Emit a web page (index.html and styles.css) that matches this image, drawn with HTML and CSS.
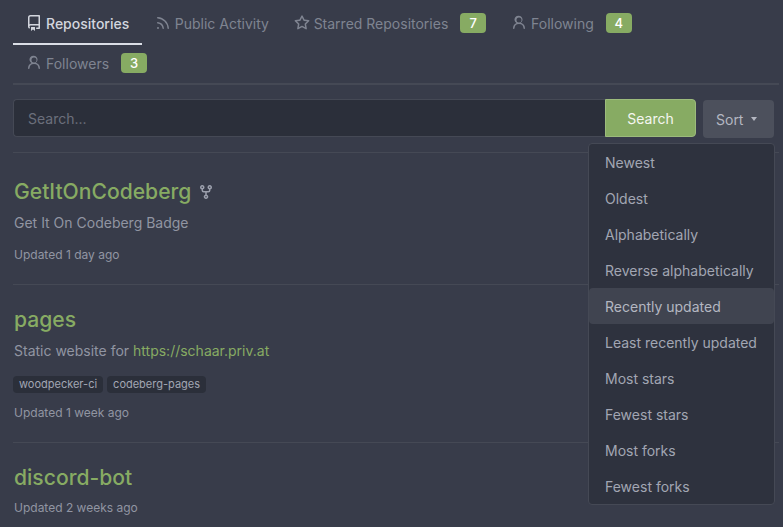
FILE: index.html
```html
<!DOCTYPE html>
<html>
<head>
<meta name="viewport" content="width=device-width, initial-scale=1">
<title>Repositories</title>
<link rel="stylesheet" href="styles.css">
</head>
<body>

<svg class="defs" width="0" height="0">
  <symbol id="i-repo" viewBox="0 0 16 16"><path d="M2 2.5A2.5 2.5 0 0 1 4.5 0h8.75a.75.75 0 0 1 .75.75v12.5a.75.75 0 0 1-.75.75h-2.5a.75.75 0 0 1 0-1.5h1.75v-2h-8a1 1 0 0 0-.714 1.7.75.75 0 1 1-1.072 1.05A2.495 2.495 0 0 1 2 11.5Zm10.5-1h-8a1 1 0 0 0-1 1v6.708A2.486 2.486 0 0 1 4.5 9h8ZM5 12.25a.25.25 0 0 1 .25-.25h3.5a.25.25 0 0 1 .25.25v3.25a.25.25 0 0 1-.4.2l-1.45-1.087a.249.249 0 0 0-.3 0L5.4 15.7a.25.25 0 0 1-.4-.2Z"/></symbol>
  <symbol id="i-rss" viewBox="0 0 16 16"><path d="M2.002 2.725a.75.75 0 0 1 .797-.699C8.79 2.42 13.58 7.21 13.974 13.201a.75.75 0 0 1-1.497.098 10.502 10.502 0 0 0-9.776-9.776.747.747 0 0 1-.7-.798ZM2.84 7.05h-.002a7.002 7.002 0 0 1 6.113 6.111.75.75 0 0 1-1.49.178 5.503 5.503 0 0 0-4.8-4.8.75.75 0 0 1 .179-1.489ZM2 13a1 1 0 1 1 2 0 1 1 0 0 1-2 0Z"/></symbol>
  <symbol id="i-star" viewBox="0 0 16 16"><path d="M8 .25a.75.75 0 0 1 .673.418l1.882 3.815 4.21.612a.75.75 0 0 1 .416 1.279l-3.046 2.97.719 4.192a.751.751 0 0 1-1.088.791L8 12.347l-3.766 1.98a.75.75 0 0 1-1.088-.79l.72-4.194L.818 6.374a.75.75 0 0 1 .416-1.28l4.21-.611L7.327.668A.75.75 0 0 1 8 .25Zm0 2.445L6.615 5.5a.75.75 0 0 1-.564.41l-3.097.45 2.24 2.184a.75.75 0 0 1 .216.664l-.528 3.084 2.769-1.456a.75.75 0 0 1 .698 0l2.77 1.456-.53-3.084a.75.75 0 0 1 .216-.664l2.24-2.183-3.096-.45a.75.75 0 0 1-.564-.41L8 2.694Z"/></symbol>
  <symbol id="i-person" viewBox="0 0 16 16"><path d="M10.561 8.073a6.005 6.005 0 0 1 3.432 5.142.75.75 0 1 1-1.498.07 4.5 4.5 0 0 0-8.99 0 .75.75 0 0 1-1.498-.07 6.004 6.004 0 0 1 3.431-5.142 3.999 3.999 0 1 1 4.123 0ZM10.5 5a2.5 2.5 0 1 0-5 0 2.5 2.5 0 0 0 5 0Z"/></symbol>
  <symbol id="i-fork" viewBox="0 0 16 16"><path d="M5 5.372v.878c0 .414.336.75.75.75h4.5a.75.75 0 0 0 .75-.75v-.878a2.25 2.25 0 1 1 1.5 0v.878a2.25 2.25 0 0 1-2.25 2.25h-1.5v2.128a2.251 2.251 0 1 1-1.5 0V8.5h-1.5A2.25 2.25 0 0 1 3.5 6.25v-.878a2.25 2.25 0 1 1 1.5 0ZM5 3.25a.75.75 0 1 0-1.5 0 .75.75 0 0 0 1.5 0Zm6.75.75a.75.75 0 1 0 0-1.5.75.75 0 0 0 0 1.5Zm-3 8.75a.75.75 0 1 0-1.5 0 .75.75 0 0 0 1.5 0Z"/></symbol>
</svg>

<div class="page">

  <div class="tabs">
    <a class="tab active"><svg class="icon"><use href="#i-repo"/></svg>Repositories</a>
    <a class="tab"><svg class="icon"><use href="#i-rss"/></svg>Public Activity</a>
    <a class="tab"><svg class="icon"><use href="#i-star"/></svg>Starred Repositories<span class="badge">7</span></a>
    <a class="tab"><svg class="icon"><use href="#i-person"/></svg>Following<span class="badge">4</span></a>
    <a class="tab"><svg class="icon"><use href="#i-person"/></svg>Followers<span class="badge">3</span></a>
  </div>

  <div class="toolbar">
    <div class="search">
      <input type="text" class="search-input" placeholder="Search...">
      <button class="search-btn">Search</button>
    </div>
    <div class="sort">
      <button class="sort-btn">Sort<span class="caret"></span></button>
      <ul class="menu">
        <li>Newest</li>
        <li>Oldest</li>
        <li>Alphabetically</li>
        <li>Reverse alphabetically</li>
        <li class="hover">Recently updated</li>
        <li>Least recently updated</li>
        <li>Most stars</li>
        <li>Fewest stars</li>
        <li>Most forks</li>
        <li>Fewest forks</li>
      </ul>
    </div>
  </div>

  <div class="repo">
    <div class="repo-title"><a class="repo-name">GetItOnCodeberg</a><svg class="icon fork"><use href="#i-fork"/></svg></div>
    <p class="repo-desc">Get It On Codeberg Badge</p>
    <p class="repo-time">Updated 1 day ago</p>
  </div>

  <div class="repo">
    <div class="repo-title"><a class="repo-name">pages</a></div>
    <p class="repo-desc">Static website for <a class="link">https://schaar.priv.at</a></p>
    <div class="topics">
      <span class="topic">woodpecker-ci</span>
      <span class="topic">codeberg-pages</span>
    </div>
    <p class="repo-time after-topics">Updated 1 week ago</p>
  </div>

  <div class="repo">
    <div class="repo-title"><a class="repo-name">discord-bot</a></div>
    <p class="repo-time after-title">Updated 2 weeks ago</p>
  </div>

</div>

</body>
</html>
```

FILE: styles.css
```css
* {
  box-sizing: border-box;
}

html, body {
  height: 527px;
  overflow: hidden;
}

body {
  margin: 0;
  background: #383c4a;
  font-family: Inter, "Noto Sans", sans-serif;
  font-size: 14px;
  color: #9195a2;
}

.defs {
  position: absolute;
}

.page {
  padding: 0 4px 0 13px;
}

/* Tabs */
.tabs {
  display: flex;
  flex-wrap: wrap;
  padding-top: 3px;
  padding-right: 6px;
  border-bottom: 2px solid #454955;
}

/* the underline hangs over the next row, so rows sit 40px apart */
.tab {
  display: flex;
  align-items: center;
  height: 42px;
  margin-bottom: -2px;
  padding: 0 11.75px 0 13px;
  color: #7f8491;
  border-bottom: 2px solid transparent;
}

.tab.active {
  padding-right: 12.5px;
  color: #d3d6de;
  font-weight: 500;
  border-bottom-color: #dbdee6;
}

.icon {
  width: 16px;
  height: 16px;
  margin-right: 4px;
  fill: currentColor;
  flex: none;
}

.badge {
  margin-left: 12px;
  width: 26px;
  height: 20px;
  line-height: 20px;
  text-align: center;
  border-radius: 4px;
  background: #87ab63;
  color: #fff;
  font-size: 13px;
  font-weight: 500;
}

/* Search row */
.toolbar {
  display: flex;
  align-items: flex-start;
  margin-top: 14px;
  margin-bottom: 22px;
  padding-right: 5px;
  padding-bottom: 14px;
  border-bottom: 1px solid #454955;
}

.search {
  display: flex;
  flex: 1;
  height: 38px;
}

.search-input {
  flex: 1;
  min-width: 0;
  padding: 0 14px;
  border: 1px solid #454955;
  border-right: 0;
  border-radius: 4px 0 0 4px;
  background: #2b2f3a;
  font: inherit;
  outline: none;
}

.search-input::placeholder {
  color: #6b6f7c;
}

.search-btn {
  width: 91px;
  border: 1px solid #9cbb7c;
  border-radius: 0 4px 4px 0;
  background: #87ab63;
  color: #f4f6f0;
  font: inherit;
}

.sort {
  position: relative;
  margin-left: 7px;
  margin-top: 1px;
}

.sort-btn {
  display: flex;
  align-items: center;
  width: 71px;
  height: 38px;
  padding: 0 13px;
  border: 0;
  border-radius: 4px;
  background: #4c505c;
  color: #b4b7c1;
  font: inherit;
}

.caret {
  margin-left: 8px;
  border-top: 4px solid #b4b7c1;
  border-left: 3.5px solid transparent;
  border-right: 3.5px solid transparent;
}

/* Sort dropdown */
.menu {
  position: absolute;
  top: 43px;
  right: -1px;
  width: 187px;
  margin: 0;
  padding: 0;
  list-style: none;
  background: #2e323e;
  border: 1px solid #454955;
  border-radius: 4px;
  z-index: 2;
}

.menu li {
  height: 36px;
  line-height: 38px;
  padding: 0 16px;
  border-radius: 4px;
  color: #a2a6b3;
}

.menu li.hover {
  background: #404450;
  color: #b4b7c1;
}

/* Repository list */
.repo {
  padding-bottom: 20px;
  margin-bottom: 18px;
  border-bottom: 1px solid #454955;
}

.repo p {
  margin: 0;
  padding-left: 1px;
}

.repo-title {
  display: flex;
  align-items: center;
  height: 32px;
  padding-left: 1px;
}

.repo-name {
  color: #87ab63;
  font-size: 21.1px;
  font-weight: 500;
}

.fork {
  margin-left: 7px;
  margin-right: 0;
  margin-top: 2px;
  color: #9ca0ad;
}

.repo .repo-desc {
  margin-top: 6px;
  line-height: 20px;
}

.link {
  color: #87ab63;
}

.topics {
  display: flex;
  gap: 4px;
  margin-top: 15px;
}

.topic {
  height: 17px;
  line-height: 17px;
  padding: 0 6px;
  border-radius: 4px;
  background: #2b2f3a;
  font-size: 11px;
  color: #a2a6b3;
}

.repo .repo-time {
  margin-top: 13px;
  font-size: 12px;
  line-height: 18px;
}

.repo .after-topics {
  margin-top: 11px;
}

.repo .after-title {
  margin-top: 6px;
}
```
